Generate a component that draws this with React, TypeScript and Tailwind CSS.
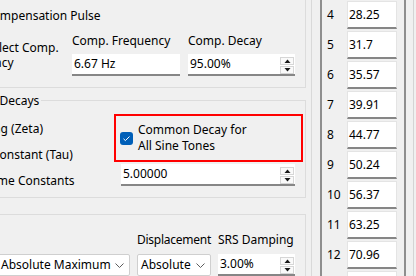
import React from 'react';

const tones = [
  { n: 4, f: '28.25' },
  { n: 5, f: '31.7' },
  { n: 6, f: '35.57' },
  { n: 7, f: '39.91' },
  { n: 8, f: '44.77' },
  { n: 9, f: '50.24' },
  { n: 10, f: '56.37' },
  { n: 11, f: '63.25' },
  { n: 12, f: '70.96' },
  { n: 13, f: '79.62' },
];

function Spinner() {
  return (
    <div className="flex flex-col gap-[1px] w-[14px] shrink-0 self-end mr-[1px]">
      <div className="h-[8px] flex items-center justify-center bg-[#fafafa] border border-[#d6d6d6]">
        <svg width="7" height="4" viewBox="0 0 7 4">
          <path d="M0.5 4L3.5 0.5L6.5 4Z" fill="#1a1a1a" />
        </svg>
      </div>
      <div className="h-[8px] flex items-center justify-center bg-[#fafafa] border border-[#d6d6d6]">
        <svg width="7" height="4" viewBox="0 0 7 4">
          <path d="M0.5 0L3.5 3.5L6.5 0Z" fill="#1a1a1a" />
        </svg>
      </div>
    </div>
  );
}

function TextBox({ value, spin, className = '' }: { value: string; spin?: boolean; className?: string }) {
  return (
    <div className={`flex items-center h-[22px] bg-white border-b-2 border-[#868686] pl-[2px] ${className}`}>
      <span className="flex-1 leading-none">{value}</span>
      {spin && <Spinner />}
    </div>
  );
}

function Combo({ value, className = '' }: { value: string; className?: string }) {
  return (
    <div className={`flex items-center justify-between h-[22px] bg-white border border-[#cfcfcf] rounded-[2px] pl-[3px] pr-[5px] ${className}`}>
      <span className="leading-none">{value}</span>
      <svg width="9" height="5" viewBox="0 0 9 5">
        <path d="M0.5 0.5L4.5 4.5L8.5 0.5" fill="none" stroke="#5c5c5c" strokeWidth="1" />
      </svg>
    </div>
  );
}

export default function App() {
  return (
    <div className="w-[416px] h-[276px] overflow-hidden flex bg-[#f0f0f0] text-[12px] text-black font-['Noto_Sans',sans-serif]">
      {/* settings panel, scrolled so its left side is out of view */}
      <div className="w-[312px] h-full shrink-0 overflow-hidden border-r border-[#d9d9d9]">
        <div className="-ml-[80px] w-[386px] flex flex-col">
          {/* Compensation pulse */}
          <div className="-mt-[12px] h-[100px] border border-[#dcdcdc] pl-[39px]">
            <div className="mt-[19px] h-[16px] leading-[16px] ml-[25px]">Compensation Pulse</div>
            <div className="flex">
              <div className="w-[112px] -ml-[5px] mr-[5px] mt-[16px] leading-[15px]">
                Auto-Select Comp.
                <br />
                Frequency
              </div>
              <div className="w-[116px] flex flex-col">
                <div className="mt-[9px] h-[16px] leading-[16px]">Comp. Frequency</div>
                <TextBox value="6.67 Hz" className="mt-[5px] w-[108px]" />
              </div>
              <div className="w-[107px] flex flex-col">
                <div className="mt-[9px] h-[16px] leading-[16px]">Comp. Decay</div>
                <TextBox value="95.00%" spin className="mt-[5px]" />
              </div>
            </div>
          </div>

          {/* Decays */}
          <fieldset className="mt-[4px] h-[106px] border border-[#dcdcdc] pl-[19px]">
            <legend className="px-[2px] leading-[17px]">Sine Tone Decays</legend>
            <div className="ml-[20px] flex">
              <div className="w-[154px] mt-[7px] flex flex-col">
                <div className="h-[26px] flex items-center -ml-[4px]">Damping (Zeta)</div>
                <div className="h-[26px] flex items-center ml-[1px]">Time Constant (Tau)</div>
                <div className="h-[26px] flex items-center -ml-[7px]">Num. Time Constants</div>
              </div>
              <div className="flex flex-col">
                <div className="mt-[5px] w-[189px] h-[48px] border-2 border-[#ff0000] flex items-center pl-[4px]">
                  <div className="w-[13px] h-[13px] rounded-[3px] bg-[#005fb8] flex items-center justify-center shrink-0">
                    <svg width="9" height="7" viewBox="0 0 9 7">
                      <path d="M1.5 3.8L3.4 5.6L7.5 1.5" fill="none" stroke="#ffffff" strokeWidth="1" />
                    </svg>
                  </div>
                  <div className="ml-[5px] leading-[16px]">
                    Common Decay for
                    <br />
                    All Sine Tones
                  </div>
                </div>
                <TextBox value="5.00000" spin className="mt-[2px] ml-[7px] w-[174px]" />
              </div>
            </div>
          </fieldset>

          {/* Output */}
          <div className="mt-[16px] h-[80px] border-t border-x border-[#dcdcdc] pl-[39px]">
            <div className="ml-[37px] flex gap-[7px]">
              <div className="w-[133px] flex flex-col">
                <div className="mt-[17px] h-[16px]" />
                <Combo value="Absolute Maximum" className="mt-[6px]" />
              </div>
              <div className="w-[74px] flex flex-col">
                <div className="mt-[17px] h-[16px] leading-[16px] whitespace-nowrap tracking-[-0.25px]">Displacement</div>
                <Combo value="Absolute" className="mt-[6px]" />
              </div>
              <div className="w-[77px] flex flex-col">
                <div className="mt-[17px] h-[16px] leading-[16px] whitespace-nowrap">SRS Damping</div>
                <TextBox value="3.00%" spin className="mt-[6px]" />
              </div>
            </div>
          </div>
        </div>
      </div>

      {/* sine tone frequency list */}
      <div className="ml-[8px] w-[86px] h-full shrink-0 border-x-2 border-[#8e8e8e] pl-[5px] overflow-hidden">
        {tones.map((t) => (
          <div key={t.n} className="h-[30px] flex items-center">
            <div className="w-[20px]">{t.n}</div>
            <div className="w-[50px] h-[28px] flex items-center bg-white border border-[#e4e4e4] border-b-2 border-b-[#868686] pl-[1px]">
              {t.f}
            </div>
          </div>
        ))}
      </div>
      <div className="ml-[7px] w-[1px] h-full bg-[#d4d4d4]" />
    </div>
  );
}
